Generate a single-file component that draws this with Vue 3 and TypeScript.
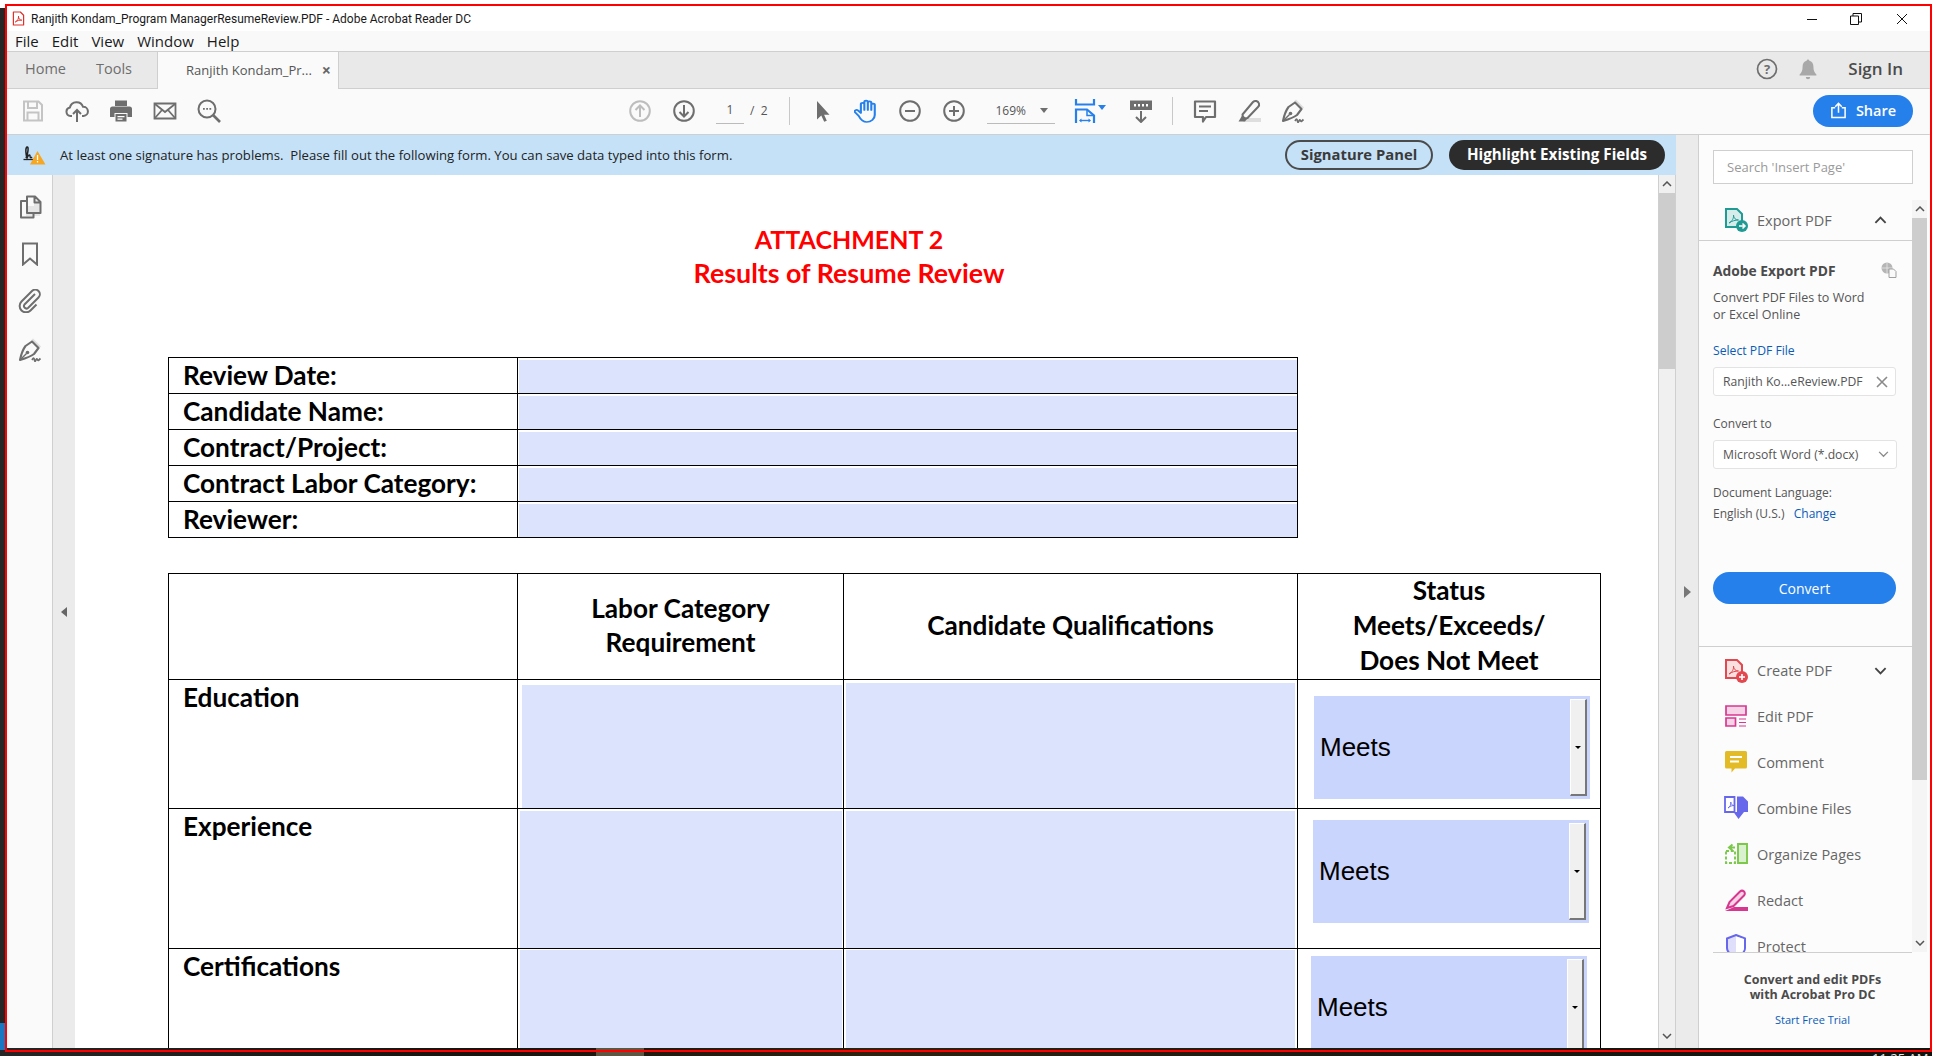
<script setup lang="ts">
const menus = ["File", "Edit", "View", "Window", "Help"];
const topRows = ["Review Date:", "Candidate Name:", "Contract/Project:", "Contract Labor Category:", "Reviewer:"];
const reviewRows = [
  { label: "Education", key: "edu" },
  { label: "Experience", key: "exp" },
  { label: "Certifications", key: "cert" },
];
</script>

<template>
  <div class="desk">
    <span class="task-glow" />
    <span class="task-start" />
    <span class="clock">11:25 AM</span>
    <div class="frame">
      <header class="titlebar">
        <svg class="pdf-mark" viewBox="0 0 14 16" width="13" height="15">
          <path d="M1.5 1h7.5l3.5 3.500v10.500h-11z" fill="#fff" stroke="#e0302a" stroke-width="1.300" stroke-linejoin="round" />
          <path d="M3.500 11.800c2.400-1 3.800-3.600 3.500-6.300-.2 2.600 1.400 4.300 3.600 4.300-2.500-.2-5.200.5-7.100 2z" fill="none" stroke="#e0302a" stroke-width="1" />
        </svg>
        <span class="title-text">Ranjith Kondam_Program ManagerResumeReview.PDF - Adobe Acrobat Reader DC</span>
        <div class="win-btns">
          <svg viewBox="0 0 12 12" width="12" height="12"><path d="M1 6.500h10" stroke="#111" fill="none" /></svg>
          <svg viewBox="0 0 12 12" width="12" height="12"><path d="M.5 3h8v8.500h-8zM3 3V.5h8.500V9H8.500" stroke="#111" fill="none" /></svg>
          <svg viewBox="0 0 12 12" width="12" height="12"><path d="M1 1l10 10M11 1L1 11" stroke="#111" fill="none" /></svg>
        </div>
      </header>

      <nav class="menubar">
        <span v-for="m in menus" :key="m">{{ m }}</span>
      </nav>

      <div class="tabbar">
        <span class="tab-link">Home</span>
        <span class="tab-link tools">Tools</span>
        <div class="tab-active">
          <span>Ranjith Kondam_Pr...</span>
          <b class="tab-x">×</b>
        </div>
        <div class="tab-right">
          <svg viewBox="0 0 22 22" width="22" height="22">
            <circle cx="11" cy="11" r="9.500" fill="none" stroke="#6e6e6e" stroke-width="1.700" />
            <text x="11" y="15.500" text-anchor="middle" class="q-mark">?</text>
          </svg>
          <svg class="bell" viewBox="0 0 20 22" width="20" height="22">
            <path d="M10 1.500c.8 0 1.300.6 1.400 1.300 2.600.7 4 3 4 5.700 0 4 1 6 3 8v1H1.600v-1c2-2 3-4 3-8 0-2.700 1.400-5 4-5.700.1-.7.600-1.300 1.400-1.300zM7.800 19h4.400a2.200 2.200 0 0 1-4.400 0z" fill="#a8a8a8" />
          </svg>
          <span class="sign-in">Sign In</span>
        </div>
      </div>

      <div class="toolbar">
        <div class="tool-group">
          <svg class="ico" viewBox="0 0 24 24"><g fill="none" stroke="#c4c4c4" stroke-width="2"><path d="M3 2.500h14.500L21 6v15.500H3z" /><path d="M7 3v6h9V3M6.500 21v-7.500h11V21" /></g></svg>
          <svg class="ico" viewBox="0 0 24 24"><g fill="none" stroke="#6e6e6e" stroke-width="2"><path d="M7 17H5.500a4.300 4.300 0 0 1-.6-8.500A6.800 6.800 0 0 1 18 7.800a4.600 4.600 0 0 1 .6 9.200H17" /><path d="M12 23V11.500M8 15l4-4 4 4" /></g></svg>
          <svg class="ico" viewBox="0 0 24 24"><path d="M6 1.500h12V7H6zM3.500 7.500h17A2.500 2.500 0 0 1 23 10v8h-4.500v-4h-13v4H1v-8a2.500 2.500 0 0 1 2.500-2.500z" fill="#6e6e6e" /><path d="M6.500 15h11v7.500h-11z" fill="#6e6e6e" /><path d="M8.500 17h7v1.200h-7zM8.500 19.500h5v1.200h-5z" fill="#fff" /></svg>
          <svg class="ico" viewBox="0 0 24 24"><g fill="none" stroke="#6e6e6e" stroke-width="1.800"><path d="M1.500 4.500h21v15h-21z" /><path d="M2 5l10 8 10-8M2 19l7-8M22 19l-7-8" /></g></svg>
          <svg class="ico" viewBox="0 0 24 24"><circle cx="10" cy="10" r="8.500" fill="none" stroke="#6e6e6e" stroke-width="2" /><path d="M16 16l7 7" stroke="#6e6e6e" stroke-width="2.600" /><path d="M6 9h1.800v1.800H6zM9.200 9H11v1.800H9.200zM12.400 9h1.800v1.800h-1.800z" fill="#6e6e6e" /></svg>
        </div>

        <div class="tool-group nav-group">
          <svg class="ico" viewBox="0 0 24 24"><g fill="none" stroke="#bdbdbd" stroke-width="2"><circle cx="12" cy="12" r="9.800" /><path d="M12 18V6.500M7.500 11L12 6.500l4.500 4.500" /></g></svg>
          <svg class="ico" viewBox="0 0 24 24"><g fill="none" stroke="#6e6e6e" stroke-width="2"><circle cx="12" cy="12" r="9.800" /><path d="M12 6v11.500M7.500 13l4.500 4.500 4.500-4.500" /></g></svg>
          <div class="page-field"><span class="page-now">1</span></div>
          <span class="page-of">/ &nbsp;2</span>
          <i class="tb-sep" />
          <svg class="ico" viewBox="0 0 24 24"><path d="M7 2v18.500l4.300-4 2.900 6.300 2.600-1.100-2.700-6h5.400z" fill="#6e6e6e" /></svg>
          <svg class="ico" viewBox="0 0 24 24"><path transform="translate(-1.800 0) scale(1.240 1)" d="M5.300 17l-3-3.700a1.500 1.500 0 0 1 2.300-1.900L7 14V5.300a1.400 1.400 0 0 1 2.800 0V11V3a1.400 1.400 0 0 1 2.800 0v8V3.700a1.400 1.400 0 0 1 2.800 0V11V6a1.400 1.400 0 0 1 2.800 0V16c0 4-3 7-6.500 7-3 0-5-2.500-6.400-6z" fill="none" stroke="#2680eb" stroke-width="1.700" stroke-linejoin="round" /></svg>
          <svg class="ico" viewBox="0 0 24 24"><g fill="none" stroke="#6e6e6e" stroke-width="2"><circle cx="12" cy="12" r="9.800" /><path d="M7 12h10" /></g></svg>
          <svg class="ico" viewBox="0 0 24 24"><g fill="none" stroke="#6e6e6e" stroke-width="2"><circle cx="12" cy="12" r="9.800" /><path d="M7 12h10M12 7v10" /></g></svg>
          <div class="zoom-field"><span>169%</span><i class="zoom-caret" /></div>
          <div class="fit">
            <svg class="ico" viewBox="0 0 24 24"><g fill="none" stroke="#2680eb" stroke-width="2.200"><path d="M3 0v5.500h18V0" /><path d="M3 24V10.500h11l7 6V24" /><path d="M14 10.500v6h7" stroke-width="1.500" /></g><path d="M7 21.500h10" stroke="#2680eb" stroke-width="1.400" /><path d="M8.500 19.500l-2.500 2 2.500 2zM15.500 19.500l2.500 2-2.500 2z" fill="#2680eb" /></svg>
            <i class="fit-caret" />
          </div>
          <svg class="ico read" viewBox="0 0 24 24"><path d="M1 1.500h22V11H1z" fill="#6e6e6e" /><path d="M5 5h2v2.500H5zM9 5h2v2.500H9zM13 5h2v2.500h-2zM17 5h2v2.500h-2z" fill="#fff" /><path d="M12 12v11M7 18l5 5 5-5" fill="none" stroke="#6e6e6e" stroke-width="2" /></svg>
          <i class="tb-sep second" />
          <svg class="ico" viewBox="0 0 24 24"><path d="M2 2.500h20v15.500H13l-3 4.500V18H2z" fill="none" stroke="#6e6e6e" stroke-width="2.200" stroke-linejoin="round" /><path d="M6 7.500h12M6 12h9" stroke="#6e6e6e" stroke-width="1.800" /></svg>
          <svg class="ico" viewBox="0 0 24 24"><path d="M8 19h16v4H6z" fill="#dedede" /><path d="M5.500 15.500L16 3c2-2 5-1 6 1.500.5 1.500 0 2.500-1 3.500L10.500 19 6 20z" fill="none" stroke="#6e6e6e" stroke-width="2" stroke-linejoin="round" /><path d="M5.500 16l4.500 4-2 2.500H1.500z" fill="#6e6e6e" /></svg>
          <svg class="ico" viewBox="0 0 24 24"><path d="M15 .5l8 8-2 2-8-8z" fill="#dedede" /><path d="M14 3.500l6.500 6.500-4.500 6c-4 3-9 4.500-14 6 1-5 2.500-10 5.500-14z" fill="none" stroke="#6e6e6e" stroke-width="2.100" stroke-linejoin="round" /><path d="M2.500 21.500l6-6" stroke="#6e6e6e" stroke-width="1.500" /><circle cx="9.500" cy="14.500" r="1.800" fill="#6e6e6e" /><path d="M14 22c1.500-2.500 2-2.500 2.500 0s1 1 1.700-.5.800-.5 1.500.5 1 0 2.800-1.500" fill="none" stroke="#6e6e6e" stroke-width="1.700" /></svg>
        </div>

        <button class="share">
          <svg viewBox="0 0 18 18" width="17" height="17"><path d="M5.500 6H2v10.500h14V6h-3.500" fill="none" stroke="#fff" stroke-width="1.600" /><path d="M9 11.500V1.500M5.500 5L9 1.500 12.500 5" fill="none" stroke="#fff" stroke-width="1.600" /></svg>
          Share
        </button>
      </div>

      <div class="main">
        <div class="workspace">
          <div class="banner">
            <svg class="sig-warn" viewBox="0 0 24 20" width="24" height="20">
              <path d="M1.500 14.500h13" stroke="#222" stroke-width="1.300" />
              <path d="M4 13c2-4 3-12 1-11s-1 8 0 11c1-3 3-4 3-2s1 2 2 1" fill="none" stroke="#222" stroke-width="1.500" />
              <path d="M15.500 6l8 13.500h-15.500z" fill="#f5a623" />
              <path d="M14.900 10h1.300v5h-1.300zM14.900 16h1.300v1.500h-1.300z" fill="#fff" />
            </svg>
            <span class="banner-text">At least one signature has problems.&nbsp; Please fill out the following form. You can save data typed into this form.</span>
            <button class="pill outline">Signature Panel</button>
            <button class="pill dark">Highlight Existing Fields</button>
          </div>
          <div class="viewer">
            <aside class="rail">
              <svg class="rail-ico" viewBox="0 0 24 24"><path d="M16 3v8h-8V21h14V8z" fill="#e6e6e6" /><g fill="none" stroke="#6e6e6e" stroke-width="2" stroke-linejoin="round"><path d="M9 1.500h8l5.500 5.500v11H9zM16.500 1.500V7.500h6" /><path d="M9 6H3v16.500h12.500V18" /></g></svg>
              <svg class="rail-ico" viewBox="0 0 24 24"><path d="M5 1.500h14v21l-7-6-7 6z" fill="none" stroke="#6e6e6e" stroke-width="2" /></svg>
              <svg class="rail-ico" viewBox="0 0 24 24"><path d="M17 5L6.500 15.500a2.500 2.500 0 0 0 3.500 3.500L20.500 8.500a4.500 4.500 0 0 0-6.500-6.500L3.500 12.500a6.300 6.300 0 0 0 9 9l6-6" fill="none" stroke="#6e6e6e" stroke-width="2" /></svg>
              <svg class="rail-ico pen" viewBox="0 0 24 24"><path d="M15 .5l8 8-2 2-8-8z" fill="#dedede" /><path d="M14 3.500l6.500 6.500-4.500 6c-4 3-9 4.500-14 6 1-5 2.500-10 5.500-14z" fill="none" stroke="#6e6e6e" stroke-width="2.100" stroke-linejoin="round" /><path d="M2.500 21.500l6-6" stroke="#6e6e6e" stroke-width="1.500" /><circle cx="9.500" cy="14.500" r="1.800" fill="#6e6e6e" /><path d="M14 22c1.500-2.500 2-2.500 2.500 0s1 1 1.700-.5.800-.5 1.500.5 1 0 2.800-1.500" fill="none" stroke="#6e6e6e" stroke-width="1.700" /></svg>
            </aside>
            <div class="gutter"><i class="tri-left" /></div>
            <main class="page">
              <h1 class="doc-title">ATTACHMENT 2</h1>
              <h2 class="doc-sub">Results of Resume Review</h2>
              <section class="info-table">
                <template v-for="r in topRows" :key="r">
                  <div class="cell label">{{ r }}</div>
                  <div class="cell"><div class="info-field" /></div>
                </template>
              </section>
              <section class="review-table">
                <div class="cell" />
                <div class="cell head">Labor Category<br />Requirement</div>
                <div class="cell head">Candidate Qualifications</div>
                <div class="cell head status">Status<br />Meets/Exceeds/<br />Does Not Meet</div>
                <template v-for="row in reviewRows" :key="row.key">
                  <div class="cell row-label">{{ row.label }}</div>
                  <div class="cell"><div class="req-field" :class="`req-${row.key}`" /></div>
                  <div class="cell"><div class="qual-field" :class="`qual-${row.key}`" /></div>
                  <div class="cell">
                    <div class="meets" :class="`meets-${row.key}`">
                      <span>Meets</span>
                      <span class="meets-btn"><i /></span>
                    </div>
                  </div>
                </template>
              </section>
            </main>
            <div class="doc-scroll">
              <svg class="chev" viewBox="0 0 10 6" width="10" height="6"><path d="M1 5l4-4 4 4" fill="none" stroke="#555" stroke-width="1.500" /></svg>
              <div class="doc-thumb" />
              <div class="doc-track" />
              <svg class="chev" viewBox="0 0 10 6" width="10" height="6"><path d="M1 1l4 4 4-4" fill="none" stroke="#555" stroke-width="1.500" /></svg>
            </div>
          </div>
        </div>

        <div class="gutter wide"><i class="tri-right" /></div>

        <aside class="panel">
          <div class="search-wrap"><div class="search-box">Search 'Insert Page'</div></div>
          <div class="panel-mid">
            <div class="panel-body">
              <div class="section-head">
                <svg class="tool-ico" viewBox="0 0 24 24"><path d="M2 1h11l5 5v13H2z" fill="#d5eceb" stroke="#1f9b94" stroke-width="2" /><path d="M5 15c3-1.500 5-5 4.500-8 0 3 2 5 5 5-3 0-7 1-9.500 3z" fill="none" stroke="#1f9b94" stroke-width="1" /><circle cx="18" cy="18" r="6" fill="#1f9b94" /><path d="M15 18h6M18.500 15.500L21 18l-2.500 2.500" fill="none" stroke="#fff" stroke-width="1.500" /></svg>
                <span>Export PDF</span>
                <svg class="section-chev" viewBox="0 0 14 8" width="13" height="8"><path d="M1.500 7L7 1.500 12.500 7" fill="none" stroke="#444" stroke-width="2" /></svg>
              </div>
              <div class="export-body">
                <div class="export-title">
                  <b>Adobe Export PDF</b>
                  <svg viewBox="0 0 16 16" width="16" height="16"><circle cx="6" cy="6" r="5.500" fill="#b5b5b5" /><path d="M6 .5v11M.5 6h11" stroke="#e8e8e8" stroke-width=".8" /><path d="M8 7h4.500L15 9.500V15.500H8z" fill="#fafafa" stroke="#a0a0a0" /></svg>
                </div>
                <p class="desc">Convert PDF Files to Word<br />or Excel Online</p>
                <div class="link select-file">Select PDF File</div>
                <div class="picker">
                  <span>Ranjith Ko...eReview.PDF</span>
                  <svg viewBox="0 0 12 12" width="12" height="12"><path d="M1 1l10 10M11 1L1 11" fill="none" stroke="#8a8a8a" stroke-width="1.600" /></svg>
                </div>
                <div class="muted convert-to">Convert to</div>
                <div class="picker wide-picker">
                  <span>Microsoft Word (*.docx)</span>
                  <svg viewBox="0 0 12 8" width="11" height="7"><path d="M1 1l5 5 5-5" fill="none" stroke="#8a8a8a" stroke-width="1.500" /></svg>
                </div>
                <div class="muted doc-lang">Document Language:</div>
                <div class="muted lang-row">English (U.S.) &nbsp;<span class="link change">Change</span></div>
                <button class="convert">Convert</button>
              </div>
              <div class="tool-list">
                <div class="tool-row current">
                  <svg class="tool-ico" viewBox="0 0 24 24"><path d="M2 1h11l5 5v13H2z" fill="#fbe0e0" stroke="#e34850" stroke-width="2" /><path d="M5 15c3-1.500 5-5 4.500-8 0 3 2 5 5 5-3 0-7 1-9.500 3z" fill="none" stroke="#e34850" stroke-width="1" /><circle cx="18" cy="18" r="6" fill="#e34850" /><path d="M15 18h6M18 15v6" stroke="#fff" stroke-width="1.600" /></svg>
                  <span>Create PDF</span>
                  <svg class="section-chev" viewBox="0 0 14 8" width="13" height="8"><path d="M1.500 1L7 6.500 12.500 1" fill="none" stroke="#444" stroke-width="2" /></svg>
                </div>
                <div class="tool-row">
                  <svg class="tool-ico" viewBox="0 0 24 24"><g stroke="#d83790" stroke-width="1.700"><path d="M2 2h20v9H2z" fill="#f7d3e7" /><path d="M2 14h9.500v8H2z" fill="#f7d3e7" /><path d="M15 15h7M15 18.500h7M15 22h7" fill="none" stroke-width="1.100" /></g></svg>
                  <span>Edit PDF</span>
                </div>
                <div class="tool-row">
                  <svg class="tool-ico" viewBox="0 0 24 24"><path d="M2.500 1h19a1.500 1.500 0 0 1 1.500 1.500V17a1.500 1.500 0 0 1-1.500 1.500H11l-3.500 4v-4h-5A1.500 1.500 0 0 1 1 17V2.500A1.500 1.500 0 0 1 2.500 1z" fill="#e3bb27" /><path d="M6 7h12M6 11.500h9" stroke="#fff" stroke-width="1.800" /></svg>
                  <span>Comment</span>
                </div>
                <div class="tool-row">
                  <svg class="tool-ico" viewBox="0 0 24 24"><path d="M1 1h9.500v15H1z" fill="#fff" stroke="#6767ec" stroke-width="1.800" /><path d="M4 12c2-1 3-3 2.800-6 0 2 1.500 3.500 3.200 3.500-2 0-4.300.8-6 2.500z" fill="none" stroke="#6767ec" stroke-width=".9" /><path d="M13 .5h6l5 5V16H13zM9.500 16h4v-4h3v4h3.500L14.500 23z" fill="#6767ec" /></svg>
                  <span>Combine Files</span>
                </div>
                <div class="tool-row">
                  <svg class="tool-ico" viewBox="0 0 24 24"><path d="M14 2h9v19h-9z" fill="#d9f1cf" stroke="#7bc84a" stroke-width="1.900" /><path d="M2 9h9v12H2z" fill="none" stroke="#7bc84a" stroke-width="1.900" stroke-dasharray="3 1.800" /><path d="M11 5.500H6M8.500 2.500L5 5.500l3.500 3" fill="none" stroke="#7bc84a" stroke-width="2" /></svg>
                  <span>Organize Pages</span>
                </div>
                <div class="tool-row">
                  <svg class="tool-ico" viewBox="0 0 24 24"><path d="M10 19h14v4H1l9-4z" fill="#d83790" /><path d="M3 20l2.500-6L16 3.500a2.800 2.800 0 0 1 4 4L9.500 18z" fill="#f7d3e7" stroke="#d83790" stroke-width="2" /></svg>
                  <span>Redact</span>
                </div>
                <div class="tool-row">
                  <svg class="tool-ico" viewBox="0 0 24 24"><path d="M12 1l9 3.500V14c0 4-4 7-9 9-5-2-9-5-9-9V4.500z" fill="#dfdffb" stroke="#6767ec" stroke-width="2" /><path d="M12 2.500V22c4.500-2 8-4.500 8-8V5z" fill="#fff" /></svg>
                  <span>Protect</span>
                </div>
              </div>
            </div>
            <div class="panel-scroll">
              <svg class="chev" viewBox="0 0 10 6" width="10" height="6"><path d="M1 5l4-4 4 4" fill="none" stroke="#555" stroke-width="1.500" /></svg>
              <div class="panel-thumb" />
              <div class="doc-track" />
              <svg class="chev" viewBox="0 0 10 6" width="10" height="6"><path d="M1 1l4 4 4-4" fill="none" stroke="#555" stroke-width="1.500" /></svg>
            </div>
          </div>
          <div class="promo">
            <b>Convert and edit PDFs<br />with Acrobat Pro DC</b>
            <span class="link">Start Free Trial</span>
          </div>
        </aside>
      </div>
    </div>
  </div>
</template>

<style>
html,
body {
  margin: 0;
  overflow: hidden;
}
</style>

<style scoped>
.desk {
  position: relative;
  width: 1936px;
  height: 1056px;
  box-sizing: border-box;
  padding: 4px 4px 4px 5px;
  overflow: hidden;
  font-family: "Open Sans", "Noto Sans", sans-serif;
  background:
    linear-gradient(#fff, #fff) top / 100% 4px no-repeat,
    linear-gradient(#fff, #fff) right / 4px 100% no-repeat,
    linear-gradient(#fff, #fff) left top / 5px 8px no-repeat,
    linear-gradient(90deg, #262626 0, #17140f 25%, #2e2210 45%, #1c1a12 70%, #11140f 100%);
}
.task-glow {
  position: absolute;
  left: 596px;
  top: 1046px;
  width: 48px;
  height: 10px;
  background: #5f5543;
}
.task-start {
  position: absolute;
  left: 0;
  top: 1023px;
  width: 5px;
  height: 27px;
  background: #1a78c2;
}
.clock {
  position: absolute;
  left: 1872px;
  top: 1052px;
  font: 13px/13px "Open Sans", sans-serif;
  color: #e8e8e8;
}
.frame {
  position: relative;
  height: 100%;
  box-sizing: border-box;
  border: 2px solid #f00;
  display: flex;
  flex-direction: column;
}
.titlebar {
  height: 25px;
  flex: none;
  background: #fff;
  display: flex;
  align-items: center;
  padding-left: 5px;
  gap: 6px;
}
.title-text {
  font: 12px Roboto, sans-serif;
  color: #1a1a1a;
}
.win-btns {
  margin-left: auto;
  display: flex;
  gap: 34px;
  padding-right: 22px;
}
.win-btns svg:first-child {
  margin-right: -2px;
}
.menubar {
  height: 20px;
  flex: none;
  background: #f9f9f9;
  border-bottom: 1px solid #cfcfcf;
  display: flex;
  align-items: center;
  padding-left: 8px;
  gap: 13px;
  font-size: 15px;
  color: #1a1a1a;
}
.tabbar {
  height: 36px;
  flex: none;
  box-sizing: content-box;
  background: #e9e9e9;
  border-bottom: 1px solid #cfcfcf;
  display: flex;
  align-items: center;
  font-size: 14.500px;
  color: #6e6e6e;
  line-height: 34px;
}
.tab-link {
  margin-left: 18px;
  padding-bottom: 2px;
}
.tab-link.tools {
  margin-left: 30px;
}
.tab-active {
  margin-left: 25px;
  align-self: stretch;
  width: 182px;
  box-sizing: border-box;
  margin-bottom: -1px;
  background: #fafafa;
  border: solid #cfcfcf;
  border-width: 0 1px;
  display: flex;
  align-items: center;
  padding: 0 0 2px 28px;
  font-size: 13px;
  color: #555;
}
.tab-x {
  margin-left: 10px;
  font-size: 16px;
  color: #666;
}
.tab-right {
  margin-left: auto;
  display: flex;
  align-items: center;
  padding: 0 27px 2px 0;
}
.bell {
  margin-left: 20px;
}
.q-mark {
  font: 700 13px "Open Sans", sans-serif;
  fill: #6e6e6e;
}
.sign-in {
  margin-left: 30px;
  font-size: 17px;
  font-weight: 600;
  color: #4b4b4b;
}
.toolbar {
  height: 46px;
  flex: none;
  box-sizing: border-box;
  background: #fafafa;
  border-bottom: 1px solid #cfcfcf;
  display: flex;
  align-items: center;
  padding: 0 17px 2px 14px;
}
.tool-group {
  display: flex;
  align-items: center;
  gap: 20px;
}
.nav-group {
  margin-left: 407px;
}
.ico {
  width: 24px;
  height: 24px;
  flex: none;
}
.page-field {
  width: 28px;
  height: 27px;
  margin-left: 0;
  border-bottom: 1px solid #bbb;
  text-align: center;
  font-size: 12px;
  line-height: 26px;
  color: #555;
  box-sizing: border-box;
}
.page-of {
  margin-left: -14px;
  font-size: 12px;
  color: #555;
}
.tb-sep {
  width: 1px;
  height: 28px;
  background: #c8c8c8;
  margin-left: 1px;
}
.tb-sep.second {
  margin-left: -1px;
}
.zoom-field {
  width: 68px;
  height: 27px;
  box-sizing: border-box;
  border-bottom: 1px solid #bbb;
  margin-left: 1px;
  display: flex;
  align-items: center;
  justify-content: space-between;
  padding: 0 7px 0 9px;
  font-size: 12px;
  color: #555;
}
.zoom-caret,
.fit-caret {
  width: 0;
  height: 0;
  border: 4px solid transparent;
  border-top: 5px solid #6e6e6e;
  border-bottom: 0;
}
.fit {
  display: flex;
  align-items: center;
  gap: 1px;
  margin-left: -2px;
}
.fit-caret {
  border-top-color: #2680eb;
  margin-top: -6px;
}
.read {
  margin-left: 3px;
}
.share {
  margin-left: auto;
  width: 100px;
  height: 32px;
  border: 0;
  border-radius: 16px;
  background: #2680eb;
  color: #fff;
  font: 600 14.500px "Open Sans", sans-serif;
  display: flex;
  align-items: center;
  justify-content: center;
  gap: 9px;
  padding: 0;
}
.main {
  flex: 1;
  min-height: 0;
  display: flex;
  margin-bottom: 2px;
}
.workspace {
  width: 1669px;
  flex: none;
  display: flex;
  flex-direction: column;
  min-height: 0;
}
.banner {
  height: 40px;
  flex: none;
  background: #c5e1f7;
  display: flex;
  align-items: center;
  padding: 0 11px 0 15px;
}
.banner-text {
  margin-left: 14px;
  font-size: 13.150px;
  color: #222;
}
.pill {
  height: 30px;
  border-radius: 15px;
  font: 700 15.200px/26px "Open Sans", sans-serif;
  padding: 0 0 2px;
}
.pill.outline {
  margin-left: auto;
  width: 148px;
  background: transparent;
  border: 2px solid #4b4b4b;
  color: #3a3a3a;
  font-size: 14.800px;
  line-height: 24px;
  padding-bottom: 4px;
}
.pill.dark {
  margin-left: 16px;
  width: 216px;
  background: #2c2c2c;
  border: 0;
  color: #fff;
}
.viewer {
  flex: 1;
  min-height: 0;
  display: flex;
}
.rail {
  width: 46px;
  flex: none;
  box-sizing: border-box;
  background: #fafafa;
  border-right: 1px solid #cfcfcf;
  display: flex;
  flex-direction: column;
  align-items: center;
  padding-top: 20px;
  gap: 23px;
}
.rail-ico {
  width: 24px;
  height: 24px;
  margin-right: -1px;
}
.rail-ico.pen {
  margin-top: 2px;
}
.gutter {
  width: 22px;
  flex: none;
  background: #ebebeb;
  display: flex;
  align-items: center;
  justify-content: center;
}
.tri-left {
  width: 0;
  height: 0;
  border: 5px solid transparent;
  border-right: 6px solid #666;
  border-left: 0;
}
.tri-right {
  width: 0;
  height: 0;
  border: 6px solid transparent;
  border-left: 7px solid #777;
  border-right: 0;
}
.page {
  flex: 1;
  min-width: 0;
  background: #fff;
  overflow: hidden;
  padding: 47px 0 0 93px;
  font-family: Lato, "Liberation Sans", sans-serif;
  color: #000;
}
.doc-title,
.doc-sub {
  margin: 0;
  width: 1362px;
  text-align: center;
  color: #f00;
  font-size: 26.800px;
  font-weight: 700;
  line-height: 34px;
}
.doc-title {
  font-size: 25px;
}
.info-table,
.review-table {
  display: grid;
  width: max-content;
  border-top: 1px solid #000;
  border-left: 1px solid #000;
}
.info-table {
  margin-top: 67px;
  grid-template-columns: 349px 780px;
  grid-auto-rows: 36px;
}
.review-table {
  margin-top: 35px;
  grid-template-columns: 349px 326px 454px 303px;
  grid-template-rows: 106px 129px 140px 200px;
}
.cell {
  box-sizing: border-box;
  border-right: 1px solid #000;
  border-bottom: 1px solid #000;
  font-size: 26.200px;
  font-weight: 700;
  display: flex;
  min-width: 0;
}
.label {
  align-items: center;
  padding: 0 0 2px 14px;
}
.info-field {
  flex: 1;
  margin: 2px 0 0 1px;
  background: #dce3fd;
}
.head {
  align-items: center;
  justify-content: center;
  text-align: center;
  line-height: 34px;
  padding-bottom: 3px;
}
.head.status {
  line-height: 35px;
  padding: 0 0 2px;
}
.row-label {
  padding: 1px 0 0 14px;
  line-height: 33px;
}
.req-field,
.qual-field {
  flex: 1;
  background: #dce3fd;
}
.req-edu {
  margin: 5px 1px 0 4px;
}
.req-exp {
  margin: 2px 1px 0 2px;
}
.req-cert {
  margin: 1px 1px 0 2px;
}
.qual-edu {
  margin: 3px 2px 0 2px;
}
.qual-exp {
  margin: 2px 2px 0 2px;
}
.qual-cert {
  margin: 1px 2px 0 2px;
}
.meets {
  box-sizing: border-box;
  width: 276px;
  height: 103px;
  background: #c9d5fc;
  display: flex;
  align-items: center;
  justify-content: space-between;
  padding: 3px 3px 3px 6px;
  font: 400 26px "Liberation Sans", sans-serif;
  color: #000;
}
.meets-edu {
  margin: 16px 0 0 16px;
}
.meets-exp {
  margin: 11px 0 0 15px;
}
.meets-cert {
  margin: 7px 0 0 13px;
}
.meets-btn {
  width: 17px;
  align-self: stretch;
  box-sizing: border-box;
  background: #f0f0f0;
  border: 1px solid #fff;
  border-right: 2px solid #777;
  border-bottom: 2px solid #777;
  display: flex;
  align-items: center;
  justify-content: center;
}
.meets-btn i {
  width: 0;
  height: 0;
  border: 3px solid transparent;
  border-top: 3px solid #000;
  border-bottom: 0;
}
.doc-scroll {
  width: 18px;
  flex: none;
  box-sizing: border-box;
  background: #f0f0f0;
  border: solid #cfcfcf;
  border-width: 0 1px;
  display: flex;
  flex-direction: column;
  align-items: center;
  padding-bottom: 3px;
}
.chev {
  flex: none;
  margin: 6px 0;
}
.doc-thumb {
  width: 100%;
  height: 176px;
  background: #cdcdcd;
}
.doc-track {
  flex: 1;
}
.wide {
  width: 22px;
}
.panel {
  width: 232px;
  flex: none;
  box-sizing: border-box;
  background: #fcfcfc;
  border-left: 1px solid #cfcfcf;
  display: flex;
  flex-direction: column;
  font-size: 12.500px;
  color: #555;
}
.search-wrap {
  height: 65px;
  flex: none;
  box-sizing: border-box;
  padding: 15px 17px 0 14px;
}
.search-box {
  height: 34px;
  box-sizing: border-box;
  border: 1px solid #cfcfcf;
  background: #fff;
  display: flex;
  align-items: center;
  padding-left: 13px;
  font-size: 13px;
  color: #9a9a9a;
}
.panel-mid {
  height: 752px;
  flex: none;
  display: flex;
}
.panel-body {
  width: 213px;
  flex: none;
  overflow: hidden;
}
.section-head {
  height: 41px;
  box-sizing: border-box;
  border-bottom: 1px solid #cfcfcf;
  display: flex;
  align-items: center;
  padding-left: 25px;
  font-size: 14.500px;
  color: #666;
}
.tool-ico {
  width: 24px;
  height: 24px;
  flex: none;
  margin-right: 9px;
}
.section-chev {
  margin-left: auto;
  margin-right: 25px;
}
.export-body {
  padding: 20px 0 0 14px;
}
.export-title {
  display: flex;
  align-items: center;
  justify-content: space-between;
  height: 18px;
  width: 184px;
  font-size: 13.800px;
  color: #4b4b4b;
}
.desc {
  margin: 10px 0 0;
  line-height: 17px;
  font-size: 12.500px;
}
.link {
  color: #0a5bb8;
}
.select-file {
  margin-top: 19px;
  line-height: 18px;
  font-size: 12.200px;
}
.picker {
  margin-top: 7px;
  width: 183px;
  height: 29px;
  box-sizing: border-box;
  border: 1px solid #e3e3e3;
  border-radius: 3px;
  background: #fff;
  display: flex;
  align-items: center;
  justify-content: space-between;
  padding: 0 7px 0 9px;
  font-size: 12.200px;
}
.wide-picker {
  margin-top: 7px;
  width: 184px;
}
.muted {
  line-height: 18px;
  font-size: 12px;
}
.convert-to {
  margin-top: 19px;
}
.doc-lang {
  margin-top: 15px;
}
.lang-row {
  margin-top: 3px;
}
.change {
  margin-left: 3px;
}
.convert {
  display: block;
  margin-top: 49px;
  width: 183px;
  height: 32px;
  border: 0;
  border-radius: 16px;
  background: #2680eb;
  color: #fff;
  font: 400 14px "Open Sans", sans-serif;
  padding: 0;
}
.tool-list {
  margin-top: 42px;
  border-top: 1px solid #cfcfcf;
  padding-top: 1px;
}
.tool-row {
  height: 46px;
  display: flex;
  align-items: center;
  padding-left: 25px;
  font-size: 14.500px;
  color: #666;
}
.tool-row.current {
  height: 45px;
}
.panel-scroll {
  width: 15px;
  flex: none;
  background: #f5f5f5;
  display: flex;
  flex-direction: column;
  align-items: center;
}
.panel-thumb {
  width: 100%;
  height: 562px;
  background: #cdcdcd;
}
.panel-scroll .doc-track {
  background: #fafafa;
}
.promo {
  flex: 1;
  margin-left: 14px;
  margin-right: 18px;
  border-top: 1px solid #cfcfcf;
  display: flex;
  flex-direction: column;
  align-items: center;
  padding-top: 19px;
  text-align: center;
  font-size: 12.500px;
  line-height: 15px;
}
.promo b {
  color: #4b4b4b;
}
.promo .link {
  margin-top: 10px;
  font-size: 11px;
}
</style>
